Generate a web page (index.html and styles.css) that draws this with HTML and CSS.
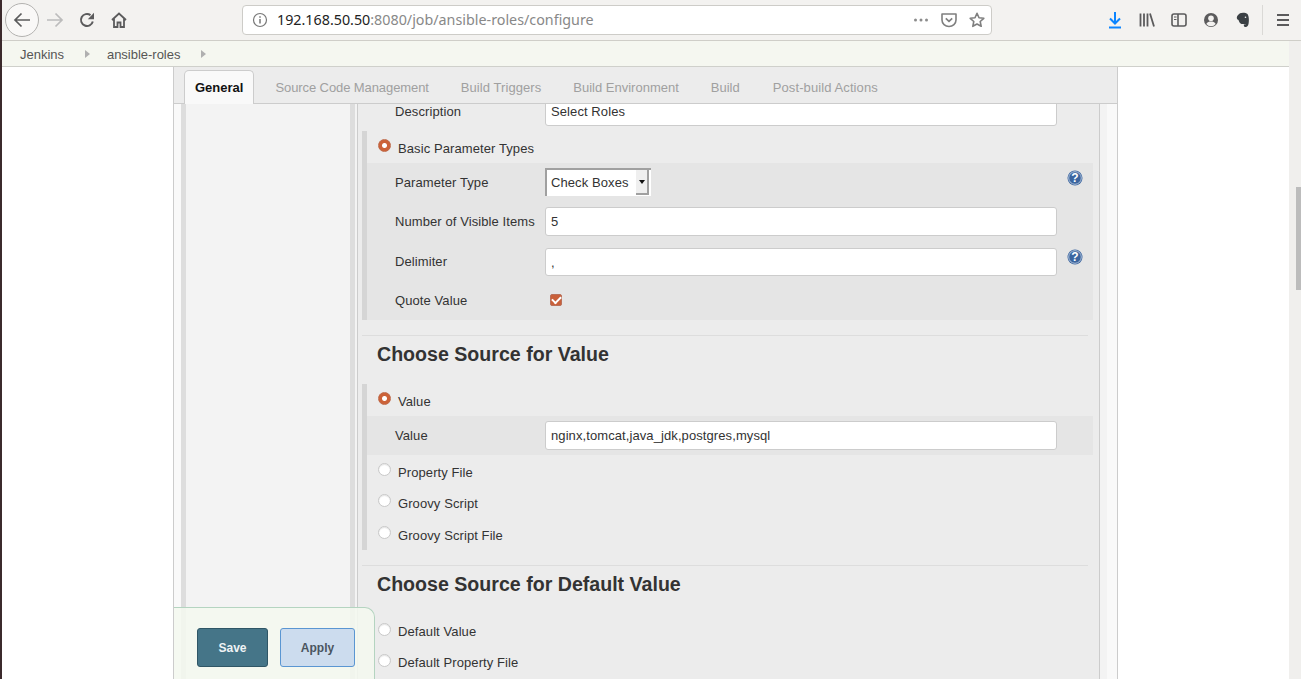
FILE: index.html
```html
<!DOCTYPE html>
<html lang="en">
<head>
    <meta charset="UTF-8">
    <title>ansible-roles Config [Jenkins]</title>
    <link rel="stylesheet" href="styles.css">
</head>
<body>
    <!-- browser chrome -->
    <div class="toolbar">
        <span class="back-btn">
            <svg width="18" height="18" viewBox="0 0 18 18"><path d="M17 9H2M8.500 2.500L2 9l6.500 6.500" fill="none" stroke="#5b5b5c" stroke-width="1.700"/></svg>
        </span>
        <span class="tool-btn">
            <svg width="18" height="18" viewBox="0 0 18 18"><path d="M1 9h15M9.500 2.500L16 9l-6.500 6.500" fill="none" stroke="#bcbcbc" stroke-width="1.700"/></svg>
        </span>
        <span class="tool-btn">
            <svg width="16" height="16" viewBox="0 0 16 16"><path d="M13.800 9.500A6 6 0 1 1 11.500 3.100" fill="none" stroke="#5b5b5c" stroke-width="2"/><path d="M15 .8v6.400H8.800z" fill="#5b5b5c"/></svg>
        </span>
        <span class="tool-btn">
            <svg width="16" height="16" viewBox="0 0 16 16"><path d="M1 8l7-6.500L15 8M3 6.500V15h3.500v-4.500h3V15H13V6.500" fill="none" stroke="#5b5b5c" stroke-width="1.800"/></svg>
        </span>
        <div class="urlbar">
            <svg class="info-icon" width="16" height="16" viewBox="0 0 16 16"><circle cx="8" cy="8" r="6.500" fill="none" stroke="#777" stroke-width="1.200"/><path d="M8 7v4.500M8 4.300v1.500" stroke="#777" stroke-width="1.500"/></svg>
            <span class="url-text">192.168.50.50<span class="url-dim">:8080/job/ansible-roles/configure</span></span>
            <svg class="url-icon" width="16" height="16" viewBox="0 0 16 16"><circle cx="2.500" cy="8" r="1.500" fill="#8c8c8c"/><circle cx="8" cy="8" r="1.500" fill="#8c8c8c"/><circle cx="13.500" cy="8" r="1.500" fill="#8c8c8c"/></svg>
            <svg class="url-icon" width="16" height="16" viewBox="0 0 16 16"><path d="M1 2h14v6a7 6.500 0 0 1-14 0z" fill="none" stroke="#7f7f7f" stroke-width="1.600" stroke-linejoin="round"/><path d="M4.800 6.300L8 9.300l3.200-3" fill="none" stroke="#7f7f7f" stroke-width="1.700"/></svg>
            <svg class="url-icon" width="16" height="16" viewBox="0 0 16 16"><path d="M8 1.300l2 4.500 4.800.5-3.600 3.200 1 4.800L8 12l-4.200 2.300 1-4.800L1.200 6.300 6 5.800z" fill="none" stroke="#7f7f7f" stroke-width="1.600" stroke-linejoin="round"/></svg>
        </div>
        <span class="tool-btn">
            <svg width="16" height="18" viewBox="0 0 16 18"><path d="M8 1v11M3 7.500L8 12.500l5-5" fill="none" stroke="#0a84ff" stroke-width="2"/><path d="M2 16.500h12" stroke="#0a84ff" stroke-width="2"/></svg>
        </span>
        <span class="tool-btn">
            <svg width="16" height="16" viewBox="0 0 16 16"><path d="M1.500 1.500v13M5 1.500v13M8.500 1.500v13M11 1.500l4 13" fill="none" stroke="#5b5b5c" stroke-width="1.800"/></svg>
        </span>
        <span class="tool-btn">
            <svg width="16" height="16" viewBox="0 0 16 16"><rect x="1" y="2" width="14" height="12" rx="2" fill="none" stroke="#5b5b5c" stroke-width="1.600"/><path d="M7 2v12" stroke="#5b5b5c" stroke-width="1.600"/><path d="M3 5h2.500M3 7.500h2.500" stroke="#5b5b5c" stroke-width="1.200"/></svg>
        </span>
        <span class="tool-btn">
            <svg width="16" height="16" viewBox="0 0 16 16"><circle cx="8" cy="8" r="7" fill="#5b5b5c"/><circle cx="8" cy="6.300" r="2.800" fill="#f3f2f0"/><path d="M3.300 12c1-2 3-2.500 4.700-2.500s3.700.5 4.700 2.500A6 6 0 0 1 3.300 12z" fill="#f3f2f0"/></svg>
        </span>
        <span class="tool-btn">
            <svg width="16" height="16" viewBox="0 0 16 16"><path d="M3 3l2-1.800C7 .3 11 .5 12.500 2 14 4 14.200 9 13.600 11.500 13.200 13.800 12 15.500 10 15c-1.500-.3-1.500-2-.5-2.500l1.500.5C10.800 12 8.500 12.600 6.500 12 4.500 11 4 9.500 3.500 8l-1-.5C1.500 6.500 1.500 4.500 3 3z" fill="#3a4044"/><circle cx="10.500" cy="5.300" r=".8" fill="#f3f2f0"/></svg>
        </span>
        <span class="tool-divider"></span>
        <span class="tool-btn">
            <svg width="16" height="16" viewBox="0 0 16 16"><path d="M2 3h12M2 8h12M2 13h12" stroke="#5b5b5c" stroke-width="2"/></svg>
        </span>
    </div>

    <div class="below">
        <div class="viewport">
            <div class="breadcrumbs">
                <a class="crumb">Jenkins</a>
                <span class="crumb-arrow"></span>
                <a class="crumb">ansible-roles</a>
                <span class="crumb-arrow"></span>
            </div>

            <div class="panel">
                <ul class="tabs">
                    <li class="tab active">General</li>
                    <li class="tab">Source Code Management</li>
                    <li class="tab">Build Triggers</li>
                    <li class="tab">Build Environment</li>
                    <li class="tab">Build</li>
                    <li class="tab">Post-build Actions</li>
                </ul>
                <div class="panel-body">
                    <div class="side"></div>
                    <div class="gutter"></div>
                    <div class="content">
                        <div class="row row-top">
                            <label class="field-label">Description</label>
                            <input class="text-input" type="text" value="Select Roles">
                        </div>

                        <div class="block">
                            <label class="radio-row"><input class="radio" type="radio" name="ptype" checked><span>Basic Parameter Types</span></label>
                            <div class="band">
                                <div class="row row-select">
                                    <label class="field-label">Parameter Type</label>
                                    <div class="fake-select"><span class="fake-select-text">Check Boxes</span><span class="fake-select-btn"></span></div>
                                    <svg class="help" width="16" height="16" viewBox="0 0 16 16"><circle cx="8" cy="8" r="7.500" fill="#3b659f"/><circle cx="8" cy="8" r="6.300" fill="none" stroke="#dfe6f0" stroke-width=".7"/><text x="8" y="12" text-anchor="middle" class="help-mark">?</text></svg>
                                </div>
                                <div class="row row-number">
                                    <label class="field-label">Number of Visible Items</label>
                                    <input class="text-input" type="text" value="5">
                                </div>
                                <div class="row row-delim">
                                    <label class="field-label">Delimiter</label>
                                    <input class="text-input" type="text" value=",">
                                    <svg class="help" width="16" height="16" viewBox="0 0 16 16"><circle cx="8" cy="8" r="7.500" fill="#3b659f"/><circle cx="8" cy="8" r="6.300" fill="none" stroke="#dfe6f0" stroke-width=".7"/><text x="8" y="12" text-anchor="middle" class="help-mark">?</text></svg>
                                </div>
                                <div class="row row-check">
                                    <label class="field-label">Quote Value</label>
                                    <span class="checkbox"></span>
                                </div>
                            </div>
                        </div>

                        <div class="section">
                            <h2 class="section-title">Choose Source for Value</h2>
                        </div>

                        <div class="block block-value">
                            <label class="radio-row"><input class="radio" type="radio" name="src" checked><span>Value</span></label>
                            <div class="band">
                                <div class="row row-value">
                                    <label class="field-label">Value</label>
                                    <input class="text-input" type="text" value="nginx,tomcat,java_jdk,postgres,mysql">
                                </div>
                            </div>
                            <label class="radio-row"><input class="radio" type="radio" name="src"><span>Property File</span></label>
                            <label class="radio-row row-short"><input class="radio" type="radio" name="src"><span>Groovy Script</span></label>
                            <label class="radio-row row-tall"><input class="radio" type="radio" name="src"><span>Groovy Script File</span></label>
                        </div>

                        <div class="section section-default">
                            <h2 class="section-title">Choose Source for Default Value</h2>
                        </div>

                        <div class="block block-plain">
                            <label class="radio-row"><input class="radio" type="radio" name="def"><span>Default Value</span></label>
                            <label class="radio-row"><input class="radio" type="radio" name="def"><span>Default Property File</span></label>
                        </div>
                    </div>
                    <div class="tail"></div>
                </div>

                <div class="savebar">
                    <button class="btn btn-save" type="button">Save</button>
                    <button class="btn btn-apply" type="button">Apply</button>
                </div>
            </div>
        </div>
        <div class="scrollbar"><div class="scroll-thumb"></div></div>
    </div>
</body>
</html>
```

FILE: styles.css
```css
* { box-sizing: border-box; }
html, body { margin: 0; height: 679px; overflow: hidden; }
body {
  font-family: "Liberation Sans", Arial, sans-serif;
  font-size: 13px;
  color: #333;
  background-color: #fff;
  border-left: 2px solid #3b2a2c;
  display: flex;
  flex-direction: column;
}

/* browser toolbar */
.toolbar {
  height: 41px;
  flex: none;
  display: flex;
  align-items: center;
  padding-left: 3px;
  background-color: #f3f2f0;
  border-bottom: 1px solid #cfcec8;
}
.back-btn {
  width: 34px;
  height: 34px;
  flex: none;
  border: 1px solid #b3b2b0;
  border-radius: 50%;
  background-color: #f9f8f7;
  display: flex;
  align-items: center;
  justify-content: center;
}
.tool-btn { width: 32px; flex: none; display: flex; justify-content: center; }
.tool-divider { width: 1px; height: 30px; margin: 0 4px 0 3px; background-color: #dad9d6; flex: none; }
.urlbar {
  width: 750px;
  height: 30px;
  flex: none;
  margin: 0 107px;
  display: flex;
  align-items: center;
  padding-left: 9px;
  padding-right: 6px;
  gap: 12px;
  background-color: #fff;
  border: 1px solid #cdccc8;
  border-radius: 4px;
}
.info-icon { margin-right: -3px; flex: none; }
.url-text { flex: 1; margin-top: -1px; font-family: "Noto Sans", sans-serif; font-size: 14.3px; color: #222; white-space: nowrap; }
.url-dim { color: #888; }
.url-icon { flex: none; }

.below { flex: 1; display: flex; min-height: 0; }
.viewport { flex: 1; min-width: 0; display: flex; flex-direction: column; }

/* breadcrumbs */
.breadcrumbs {
  height: 26px;
  flex: none;
  display: flex;
  align-items: center;
  padding: 1px 0 0 18px;
  background-color: #f5f7f0;
  border-bottom: 1px solid #cfd0cb;
}
.crumb { color: #555; letter-spacing: -0.02px; }
.crumb-arrow {
  width: 0;
  height: 0;
  margin: 0 17px 0 21px;
  border-left: 5px solid #b0b0b0;
  border-top: 4px solid transparent;
  border-bottom: 4px solid transparent;
}

/* job config panel */
.panel {
  position: relative;
  width: 945px;
  flex: 1;
  min-height: 0;
  margin-left: 171px;
  display: flex;
  flex-direction: column;
  border-left: 1px solid #ccc;
  border-right: 1px solid #ccc;
}
.tabs {
  list-style: none;
  margin: 0;
  height: 37px;
  flex: none;
  padding: 3px 0 0 10px;
  display: flex;
  gap: 10px;
  background-color: #ececec;
  border-bottom: 1px solid #ccc;
}
.tab { height: 33px; padding: 0 11px; line-height: 35px; color: #a0a0a0; white-space: nowrap; }
.tab:nth-child(2) { letter-spacing: -0.09px; }
.tab:nth-child(3) { letter-spacing: 0.07px; }
.tab:nth-child(6) { margin-left: 1px; letter-spacing: 0.1px; }
.tab.active {
  height: 34px;
  font-weight: bold;
  color: #111;
  background-color: #f9f9f9;
  border: 1px solid #ccc;
  border-bottom: none;
  border-radius: 5px 5px 0 0;
  padding: 0 10px;
  line-height: 33px;
}
.panel-body { flex: 1; min-height: 0; display: flex; background-color: #f9f9f9; overflow: hidden; }
.side {
  width: 174px;
  flex: none;
  margin-left: 7px;
  background-color: #f3f3f3;
  border-left: 5px solid #ddd;
  border-right: 5px solid #ddd;
}
.gutter { width: 2px; flex: none; background-color: #f3f3f3; }
.content {
  width: 743px;
  flex: none;
  background-color: #ececec;
  border-left: 1px solid #ccc;
  border-right: 1px solid #ccc;
  letter-spacing: 0.09px;
}
.tail { flex: 1; background: linear-gradient(to right, #f3f3f3 7px, #f9f9f9 7px); }

/* form rows */
.row { display: flex; align-items: center; padding-left: 28px; }
.field-label { width: 150px; flex: none; }
.text-input {
  width: 512px;
  height: 29px;
  padding: 0 5px;
  flex: none;
  font-family: "Liberation Sans", Arial, sans-serif;
  font-size: 13px;
  letter-spacing: 0.09px;
  color: #333;
  background-color: #fff;
  border: 1px solid #ccc;
  border-radius: 3px;
  outline: none;
}
.row-top { margin-top: -7px; margin-left: 9px; height: 34px; padding-bottom: 5px; }
.row-select { height: 38px; }
.row-number { height: 41px; }
.row-delim { height: 39px; padding-bottom: 5px; padding-top: 6px; }
.row-delim .text-input { height: 28px; }
.row-delim .field-label { margin-top: -2px; }
.row-check { height: 39px; }
.row-value { height: 39px; }
.help { flex: none; margin-left: 10px; }
.row-select .help { margin-left: 416px; margin-top: -9px; }
.row-delim .help { margin-top: -10px; }
.help-mark { font-family: "Liberation Sans", Arial, sans-serif; font-size: 12px; font-weight: bold; fill: #fff; }

.fake-select {
  width: 106px;
  height: 28px;
  display: flex;
  align-items: stretch;
  background-color: #fff;
  border-top: 2px solid #a0a0a0;
  border-left: 2px solid #a0a0a0;
  padding-bottom: 1px;
}
.fake-select-text { width: 89px; padding-left: 4px; line-height: 26px; white-space: nowrap; }
.fake-select-btn {
  width: 13px;
  border-right: 2px solid #a0a0a0;
  border-bottom: 2px solid #a0a0a0;
  background-color: #efefef;
  display: flex;
  align-items: center;
  justify-content: center;
}
.fake-select-btn::after {
  content: "";
  border-top: 4px solid #111;
  border-left: 3px solid transparent;
  border-right: 3px solid transparent;
}
.checkbox {
  width: 12px;
  height: 12px;
  margin: -2px 0 0 5px;
  display: flex;
  align-items: center;
  justify-content: center;
  background-color: #c9603a;
  border: 1px solid #b9705a;
  border-radius: 2px;
}
.checkbox::after {
  content: "";
  width: 7px;
  height: 4px;
  margin-top: -2px;
  border-left: 2px solid #fff;
  border-bottom: 2px solid #fff;
  transform: rotate(-45deg);
}

/* radio blocks */
.block {
  margin: 0 6px 0 4px;
  border-left: 5px solid #d5d5d5;
}
.block-value { height: 166px; }
.block-plain { border-left-color: transparent; }
.band { background-color: #e5e5e5; }
.radio-row { height: 32px; padding-left: 11px; display: flex; align-items: center; gap: 7px; }
.radio-row span { padding-top: 2px; }
.radio-row.row-short { height: 30px; }
.radio-row.row-tall { height: 33px; }
.block-value .radio-row:nth-child(n+3) span { padding-top: 3px; }
.block-plain .radio-row { height: 31px; }
.radio {
  appearance: none;
  width: 13px;
  height: 13px;
  margin: -3px 0 0 0;
  flex: none;
  background-color: #fff;
  border: 1px solid #c8c8c8;
  border-radius: 50%;
  box-shadow: inset 0 1px 1px #e4e4e4;
}
.radio:checked {
  background: radial-gradient(circle, #fff 0 2px, #cc6238 3px);
  border-color: #bf6a4a;
  box-shadow: none;
}

/* section headings */
.section {
  width: 726px;
  margin: 15px 0 0 4px;
  padding-left: 15px;
  border-top: 1px solid #ddd;
}
.section-title { margin: 0 0 12px 0; font-size: 19.6px; line-height: 36px; font-weight: bold; letter-spacing: 0; color: #333; }
.section-default .section-title { margin-bottom: 13px; }

/* bottom button bar */
.savebar {
  position: absolute;
  left: 0;
  bottom: 0;
  width: 201px;
  height: 72px;
  display: flex;
  gap: 12px;
  padding: 20px 0 0 23px;
  background-color: rgba(244, 248, 239, 0.88);
  border-top: 1px solid #b4d4c0;
  border-right: 1px solid #b4d4c0;
  border-radius: 0 10px 0 0;
}
.btn {
  height: 39px;
  font-family: "Liberation Sans", Arial, sans-serif;
  font-size: 12px;
  font-weight: bold;
  border-radius: 3px;
  padding: 0;
}
.btn-save { width: 71px; color: #eef3f5; background-color: #457588; border: 1px solid #2f5666; }
.btn-apply { width: 75px; color: #4a5560; background-color: #ccdcee; border: 1px solid #5a96d2; }

/* page scrollbar */
.scrollbar { width: 12px; flex: none; background-color: #f0efed; padding: 146px 0 0 7px; }
.scroll-thumb { width: 5px; height: 103px; background-color: #bcbcbc; }
```
